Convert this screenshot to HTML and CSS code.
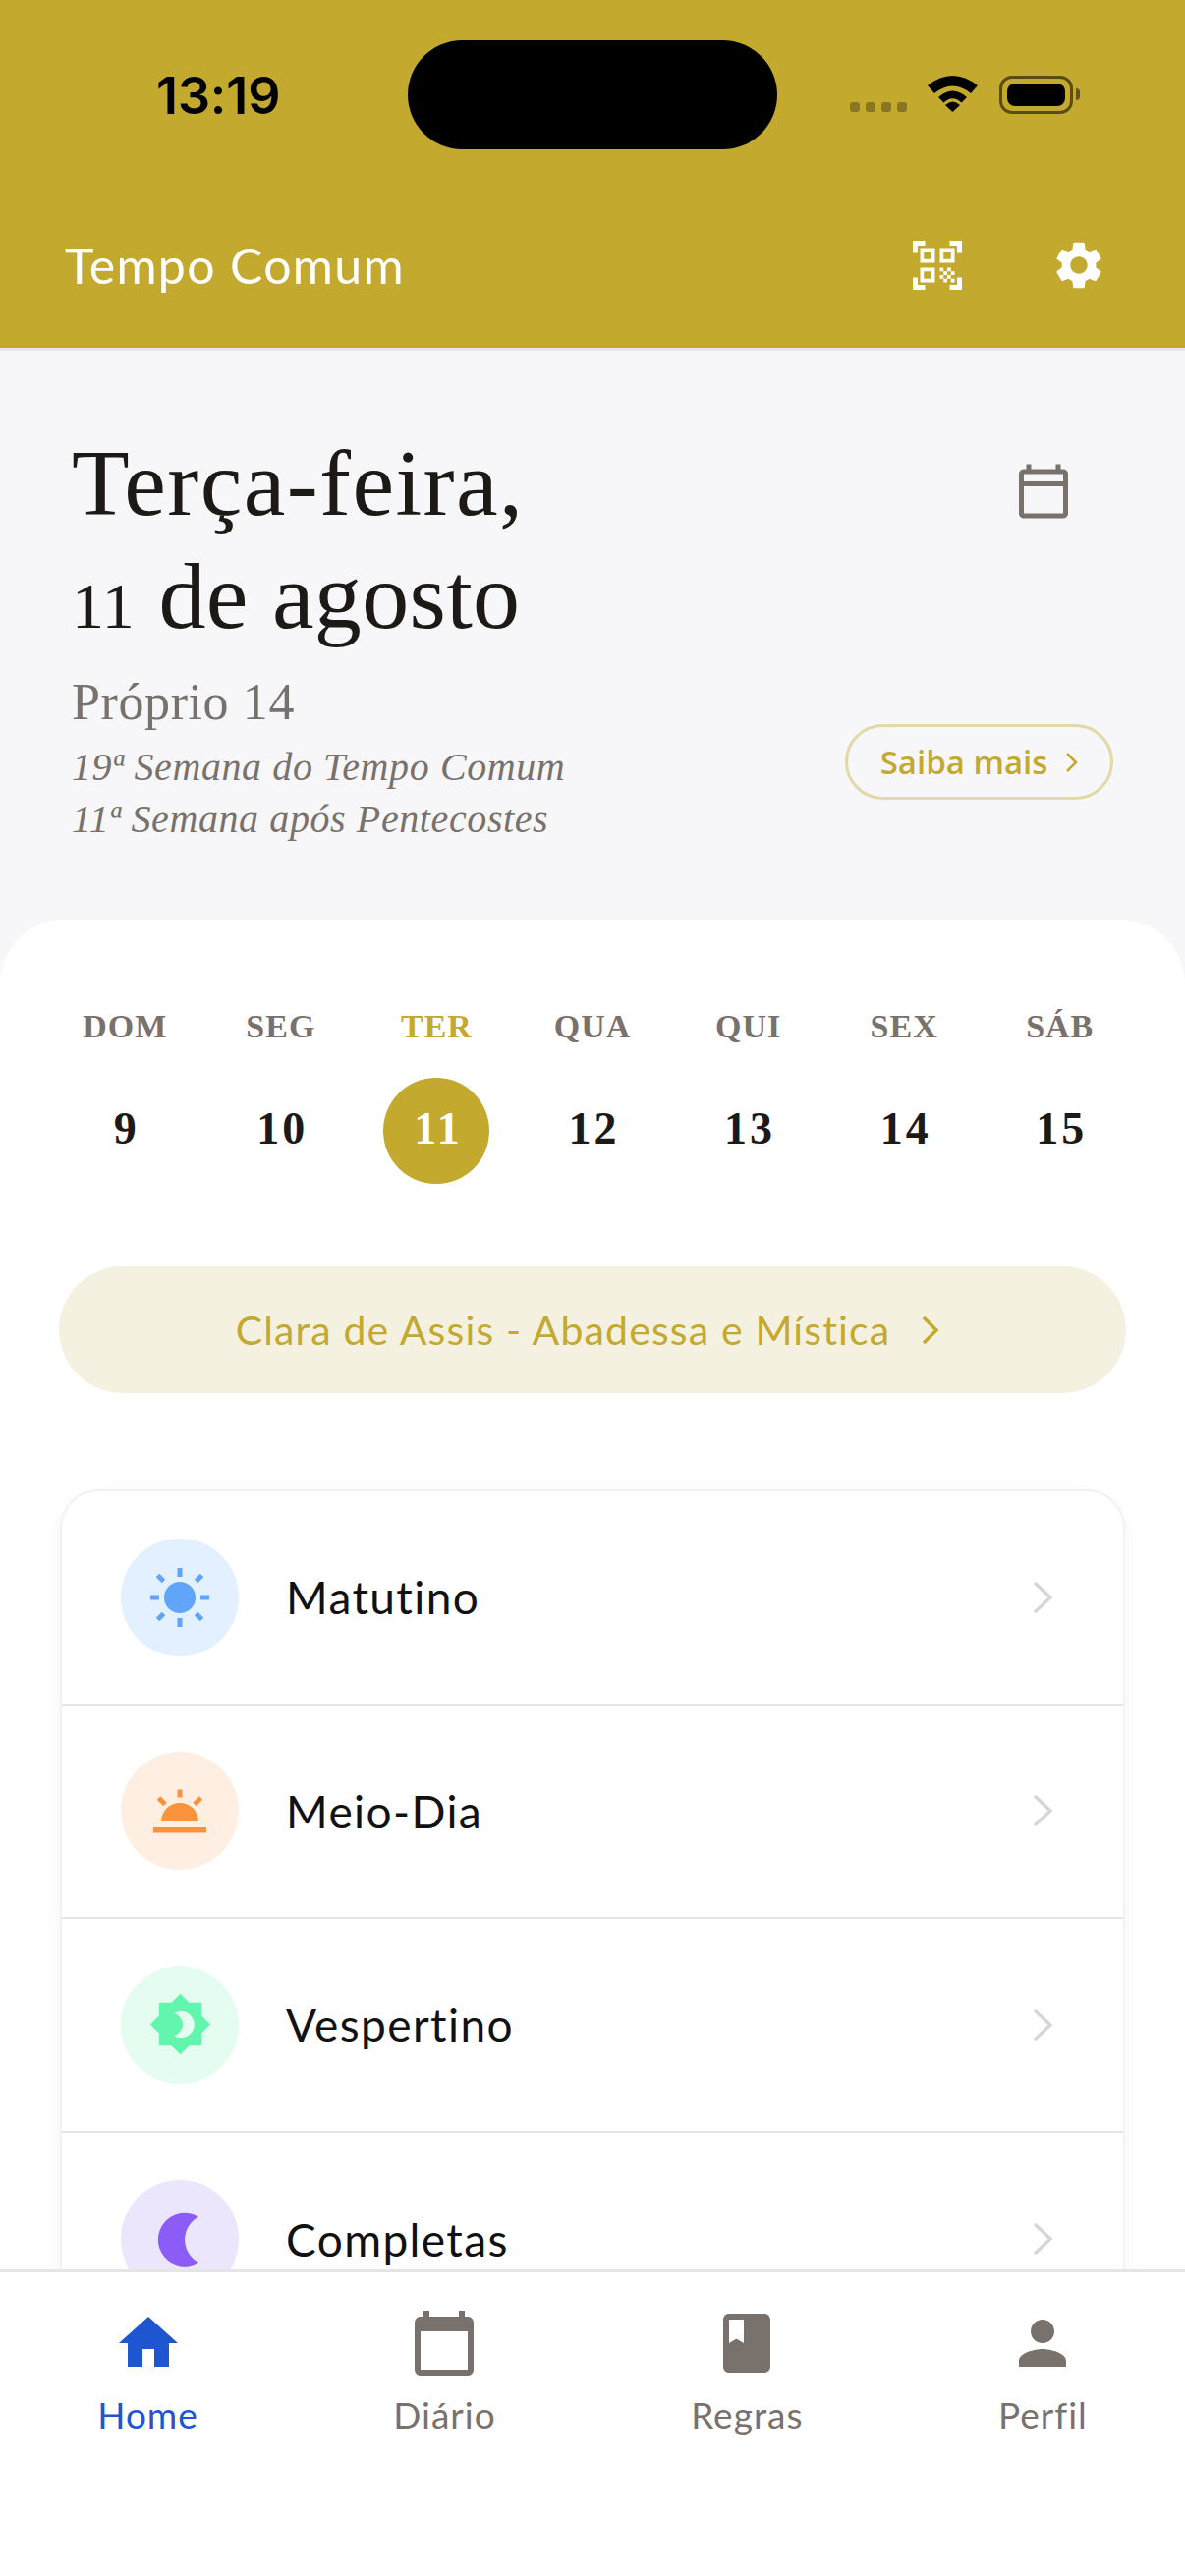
FILE: index.html
```html
<!DOCTYPE html>
<html lang="pt-BR">
<head>
    <meta charset="UTF-8">
    <meta name="viewport" content="width=device-width, initial-scale=1.0">
    <title>Tempo Comum</title>
    <link rel="stylesheet" href="styles.css">
</head>
<body>
    <header class="topo">
        <div class="status">
            <div class="hora">13:19</div>
            <div class="ilha"></div>
            <div class="status-icones">
                <div class="sinal"><span></span><span></span><span></span><span></span></div>
                <svg class="wifi" viewBox="0 0 51 37"><path d="M0 10Q25.500 -10 51 10L44 18Q25.500 3 7 18Z"/><path d="M11 22Q25.500 9 40 22L34.500 27.500Q25.500 19 16.500 27.500Z"/><path d="M18 30Q25.500 23 33 30L25.500 37Z"/></svg>
                <div class="bateria"><div class="carga"></div></div>
                <div class="bateria-ponta"></div>
            </div>
        </div>
        <div class="app-bar">
            <div class="app-titulo">Tempo Comum</div>
            <div class="app-acoes">
                <svg class="ico-qr" viewBox="0 0 24 24"><path d="M9.5 6.500v3h-3v-3h3M11 5H5v6h6V5zm-1.500 9.500v3h-3v-3h3M11 13H5v6h6v-6zm6.500-6.500v3h-3v-3h3M19 5h-6v6h6V5zm-6 8h1.500v1.500H13V13zm1.500 1.500H16V16h-1.500v-1.500zM16 13h1.500v1.500H16V13zm-3 3h1.500v1.500H13V16zm1.500 1.500H16V19h-1.500v-1.500zM16 16h1.500v1.500H16V16zm1.500-1.500H19V16h-1.500v-1.500zm0 3H19V19h-1.500v-1.500zM22 7h-2V4h-3V2h5v5zm0 15v-5h-2v3h-3v2h5zM2 22h5v-2H4v-3H2v5zM2 2v5h2V4h3V2H2z"/></svg>
                <svg class="ico-gear" viewBox="0 0 24 24"><path d="M19.140 12.940c.04-.3.06-.61.06-.94 0-.32-.02-.64-.07-.94l2.030-1.580c.18-.14.23-.41.12-.61l-1.920-3.320c-.12-.22-.37-.29-.59-.22l-2.390.96c-.5-.38-1.030-.7-1.620-.94l-.36-2.540c-.04-.24-.24-.41-.48-.41h-3.840c-.24 0-.43.17-.47.41l-.36 2.540c-.59.24-1.130.57-1.620.94l-2.390-.96c-.22-.08-.47 0-.59.22L2.740 8.870c-.12.21-.08.47.12.61l2.030 1.580c-.05.3-.09.63-.09.94s.02.64.07.94l-2.030 1.580c-.18.14-.23.41-.12.61l1.920 3.320c.12.22.37.29.59.22l2.390-.96c.5.38 1.030.7 1.620.94l.36 2.540c.05.24.24.41.48.41h3.840c.24 0 .44-.17.47-.41l.36-2.540c.59-.24 1.130-.56 1.620-.94l2.390.96c.22.08.47 0 .59-.22l1.920-3.320c.12-.22.07-.47-.12-.61l-2.010-1.580zM12 15.600c-1.980 0-3.600-1.620-3.600-3.600s1.620-3.600 3.600-3.600 3.600 1.620 3.600 3.600-1.620 3.600-3.600 3.600z"/></svg>
            </div>
        </div>
    </header>

    <main class="conteudo">
        <section class="hero">
            <div class="hero-texto">
                <h1 class="data">Terça-feira,<br><span class="data-linha2"><span class="num-antigo">11</span> de agosto</span></h1>
                <div class="proprio">Próprio 14</div>
                <div class="semana">19ª Semana do Tempo Comum</div>
                <div class="semana">11ª Semana após Pentecostes</div>
            </div>
            <div class="hero-lado">
                <svg class="ico-cal" viewBox="0 0 24 24"><path d="M20 3h-1V1h-2v2H7V1H5v2H4c-1.100 0-2 .9-2 2v16c0 1.100.9 2 2 2h16c1.100 0 2-.9 2-2V5c0-1.100-.9-2-2-2zm0 2v3H4V5h16zM4 21V10h16v11H4z"/></svg>
                <div class="saiba">Saiba mais
                    <svg class="chev-saiba" viewBox="0 0 13 20"><path d="M2 1l9 9-9 9"/></svg>
                </div>
            </div>
        </section>

        <section class="folha">
            <div class="semana-grid">
                <div class="dia"><span class="dia-nome">DOM</span><span class="dia-num">9</span></div>
                <div class="dia"><span class="dia-nome">SEG</span><span class="dia-num">10</span></div>
                <div class="dia hoje"><span class="dia-nome">TER</span><span class="dia-num">11</span></div>
                <div class="dia"><span class="dia-nome">QUA</span><span class="dia-num">12</span></div>
                <div class="dia"><span class="dia-nome">QUI</span><span class="dia-num">13</span></div>
                <div class="dia"><span class="dia-nome">SEX</span><span class="dia-num">14</span></div>
                <div class="dia"><span class="dia-nome">SÁB</span><span class="dia-num">15</span></div>
            </div>

            <div class="santo">Clara de Assis - Abadessa e Mística
                <svg class="chev-santo" viewBox="0 0 18 30"><path d="M2 2l13 13-13 13"/></svg>
            </div>

            <div class="oficios">
                <div class="oficio">
                    <div class="bolinha azul">
                        <svg viewBox="0 0 72 72"><circle cx="36" cy="36" r="16"/><path class="raio" d="M36 6v9M36 57v9M6 36h9M57 36h9M13.500 13.500l6 6M58.500 13.500l-6 6M13.500 58.500l6-6M58.500 58.500l-6-6"/></svg>
                    </div>
                    <span class="oficio-nome">Matutino</span>
                    <svg class="chev-linha" viewBox="0 0 22 34"><path d="M2 2l16 15-16 15"/></svg>
                </div>
                <div class="oficio">
                    <div class="bolinha laranja">
                        <svg viewBox="0 0 72 72"><path d="M17 47a19 19 0 0 1 38 0z"/><rect x="9" y="53" width="54" height="5.500"/><path class="raio" d="M36 14.500v8M14.500 23l6.500 6.500M57.500 23l-6.500 6.500"/></svg>
                    </div>
                    <span class="oficio-nome">Meio-Dia</span>
                    <svg class="chev-linha" viewBox="0 0 22 34"><path d="M2 2l16 15-16 15"/></svg>
                </div>
                <div class="oficio">
                    <div class="bolinha verde">
                        <svg viewBox="0 0 24 24"><path d="M20 8.690V4h-4.690L12 .69 8.690 4H4v4.690L.69 12 4 15.310V20h4.690L12 23.310 15.310 20H20v-4.690L23.310 12 20 8.690zM12.290 17c-.9 0-1.750-.2-2.530-.57C11.830 15.430 13 13.270 13 12s-1.170-3.430-3.240-4.430C10.540 7.200 11.390 7 12.290 7c2.760 0 5 2.240 5 5s-2.240 5-5 5z"/></svg>
                    </div>
                    <span class="oficio-nome">Vespertino</span>
                    <svg class="chev-linha" viewBox="0 0 22 34"><path d="M2 2l16 15-16 15"/></svg>
                </div>
                <div class="oficio">
                    <div class="bolinha roxo">
                        <svg viewBox="0 0 72 72"><path d="M55 13.750A27 27 0 1 0 55 59.750A26 26 0 0 1 55 13.750z"/></svg>
                    </div>
                    <span class="oficio-nome">Completas</span>
                    <svg class="chev-linha" viewBox="0 0 22 34"><path d="M2 2l16 15-16 15"/></svg>
                </div>
            </div>
        </section>
    </main>

    <nav class="abas">
        <div class="aba ativa">
            <svg viewBox="0 0 24 24"><path d="M10 20v-6h4v6h5v-8h3L12 3 2 12h3v8z"/></svg>
            <span>Home</span>
        </div>
        <div class="aba">
            <svg viewBox="0 0 24 24"><path d="M20 3h-1V1h-2v2H7V1H5v2H4c-1.100 0-2 .9-2 2v16c0 1.100.9 2 2 2h16c1.100 0 2-.9 2-2V5c0-1.100-.9-2-2-2zm0 18H4V8h16v13z"/></svg>
            <span>Diário</span>
        </div>
        <div class="aba">
            <svg viewBox="0 0 24 24"><path d="M18 2H6c-1.100 0-2 .9-2 2v16c0 1.100.9 2 2 2h12c1.100 0 2-.9 2-2V4c0-1.100-.9-2-2-2zM6 4h5v8l-2.500-1.500L6 12V4z"/></svg>
            <span>Regras</span>
        </div>
        <div class="aba">
            <svg viewBox="0 0 24 24"><path d="M12 12c2.210 0 4-1.790 4-4s-1.790-4-4-4-4 1.790-4 4 1.790 4 4 4zm0 2c-2.670 0-8 1.340-8 4v2h16v-2c0-2.660-5.330-4-8-4z"/></svg>
            <span>Perfil</span>
        </div>
    </nav>
</body>
</html>
```

FILE: styles.css
```css
* { box-sizing: border-box; }
html, body { margin: 0; padding: 0; }
body { width: 1206px; height: 2622px; display: flex; flex-direction: column; overflow: hidden; background-color: #f7f7f9; font-family: "Lato", "Liberation Sans", sans-serif; color: #1c1917; }

/* topo */
.topo { flex: none; height: 357px; padding-top: 41px; background-color: #c4a92f; border-bottom: 3px solid #e6e6e6; }
.status { display: flex; align-items: center; height: 111px; }
.hora { width: 415px; padding: 1px 0 0 159px; font-family: "Inter", sans-serif; font-size: 52px; font-weight: 600; letter-spacing: -0.1px; color: #000; }
.ilha { width: 376px; height: 111px; background-color: #000; border-radius: 56px; }
.status-icones { display: flex; align-items: flex-start; margin-left: 74px; }
.sinal { display: flex; gap: 6px; margin-top: 27px; }
.sinal span { width: 10px; height: 10px; border-radius: 3px; background-color: rgba(0, 0, 0, 0.3); }
.wifi { width: 51px; height: 37px; margin-left: 21px; fill: #000; }
.bateria { width: 75px; height: 39px; margin-left: 22px; padding: 5px; border: 3px solid rgba(0, 0, 0, 0.55); border-radius: 13px; }
.carga { height: 100%; background-color: #000; border-radius: 8px; }
.bateria-ponta { width: 4px; height: 12px; margin: 13px 0 0 3px; background-color: rgba(0, 0, 0, 0.5); border-radius: 0 4px 4px 0; }

.app-bar { display: flex; justify-content: space-between; align-items: center; height: 120px; margin-top: 58px; padding: 0 79px 0 66px; }
.app-titulo { font-size: 50px; color: #fff; letter-spacing: 1.3px; }
.app-acoes { display: flex; align-items: center; gap: 85px; }
.app-acoes svg { fill: #fff; }
.ico-qr { width: 60px; height: 60px; }
.ico-gear { width: 58px; height: 58px; }

/* hero */
.conteudo { flex: 1; overflow: hidden; }
.hero { display: flex; justify-content: space-between; height: 579px; padding: 77px 73px 0; }
.data { margin: 0; font-family: "Liberation Serif", serif; font-size: 96px; font-weight: 400; line-height: 115px; letter-spacing: 1.4px; color: #1c1917; }
.data-linha2 { letter-spacing: 0.3px; }
.num-antigo { font-size: 66px; }
.proprio { margin: 9px 0 7px; font-family: "Liberation Serif", serif; font-size: 52px; line-height: 64px; letter-spacing: 0.6px; color: #78716c; }
.semana { font-family: "Liberation Serif", serif; font-style: italic; font-size: 40px; line-height: 53px; letter-spacing: 0.6px; color: #78716c; }
.hero-lado { display: flex; flex-direction: column; justify-content: space-between; align-items: flex-end; height: 380px; }
.ico-cal { width: 60px; height: 60px; margin: 36px 41px 0 0; fill: #78716c; }
.saiba { display: flex; align-items: center; justify-content: center; gap: 18px; width: 273px; height: 77px; border: 3px solid #e2d8a8; border-radius: 40px; font-family: "Open Sans", sans-serif; font-size: 33px; font-weight: 600; color: #c4a92f; }
.chev-saiba { width: 13px; height: 20px; fill: none; stroke: #c4a92f; stroke-width: 2.500; }

/* folha branca */
.folha { background-color: #fff; border-radius: 66px 66px 0 0; padding-top: 89px; }
.semana-grid { display: grid; grid-template-columns: repeat(7, 1fr); padding: 0 48px; }
.dia { display: flex; flex-direction: column; align-items: center; }
.dia-nome { font-family: "Liberation Serif", serif; font-size: 34px; font-weight: 700; line-height: 40px; letter-spacing: 1px; color: #78716c; }
.dia-num { display: flex; align-items: center; justify-content: center; width: 108px; height: 108px; margin-top: 32px; padding: 0 0 6px 3px; font-family: "Liberation Serif", serif; font-size: 46px; font-weight: 700; letter-spacing: 3px; color: #1c1917; border-radius: 50%; }
.hoje .dia-nome { color: #c4a92f; }
.hoje .dia-num { background-color: #c4a92f; color: #fff; }

.santo { display: flex; align-items: center; justify-content: center; gap: 32px; height: 129px; margin: 84px 60px 0; padding-right: 10px; background-color: #f5f1e0; border-radius: 65px; font-size: 41px; letter-spacing: 1.15px; color: #c4a92f; }
.chev-santo { width: 18px; height: 30px; fill: none; stroke: #c4a92f; stroke-width: 3.500; }

/* oficios */
.oficios { margin: 98px 61px 0; background-color: #fff; border: 2px solid #f2f2f2; border-radius: 40px; box-shadow: 0 4px 14px rgba(0, 0, 0, 0.05); }
.oficio { display: flex; align-items: center; height: 217.500px; padding: 0 70px 0 60px; border-bottom: 2px solid #e5e5e5; }
.oficio:last-child { border-bottom: none; }
.bolinha { display: flex; align-items: center; justify-content: center; flex: none; width: 120px; height: 120px; border-radius: 50%; }
.bolinha svg { width: 72px; height: 72px; }
.azul { background-color: #e2f0ff; fill: #60a5fa; }
.azul .raio { stroke: #60a5fa; stroke-width: 5; }
.laranja { background-color: #ffefe2; fill: #fb923c; }
.laranja .raio { stroke: #fb923c; stroke-width: 5; }
.verde { background-color: #e4fdf0; fill: #62f5ae; }
.verde svg { width: 65px; height: 65px; }
.roxo { background-color: #ece6fd; fill: #8b5cf6; }
.oficio-nome { flex: 1; margin-left: 48px; font-size: 46px; color: #111; letter-spacing: 1.4px; }
.chev-linha { width: 22px; height: 34px; fill: none; stroke: #d6d6d6; stroke-width: 3.500; }

/* abas */
.abas { flex: none; display: flex; justify-content: space-around; height: 312px; padding-top: 36px; background-color: #fff; border-top: 3px solid #e5e5e5; }
.aba { display: flex; flex-direction: column; align-items: center; color: #78716c; fill: #78716c; font-size: 37px; }
.aba svg { width: 72px; height: 72px; }
.aba span { margin-top: 14px; letter-spacing: 1px; }
.ativa { color: #1d56d0; fill: #1d56d0; }
```
